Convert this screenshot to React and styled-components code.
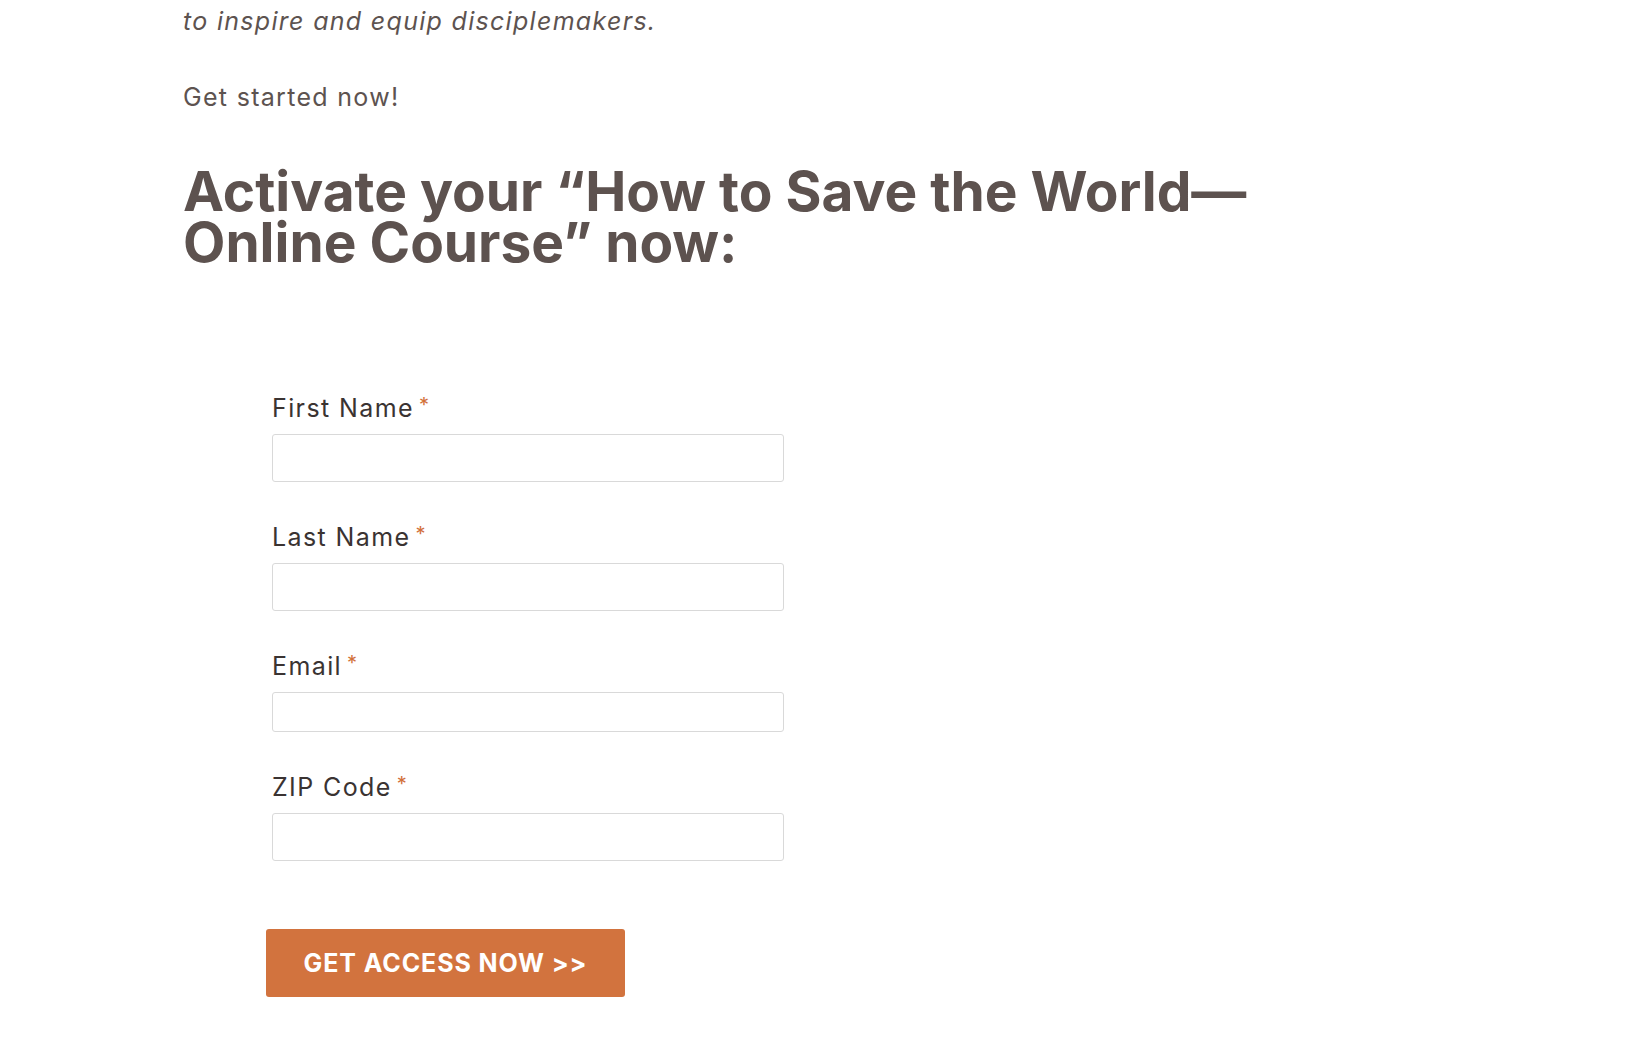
import React from "react";
import styled, { createGlobalStyle } from "styled-components";

const GlobalStyle = createGlobalStyle`
  html, body {
    margin: 0;
    padding: 0;
    background: #ffffff;
  }
  body {
    font-family: Inter, "Open Sans", "Liberation Sans", sans-serif;
    color: #5d5350;
  }
  * { box-sizing: border-box; }
`;

const Page = styled.main`
  padding: 3px 0 48px 183px;
  width: 1634px;
  overflow: hidden;
`;

const Intro = styled.p`
  margin: 0 0 40px;
  font-size: 25px;
  line-height: 36px;
  font-style: ${(p) => (p.$italic ? "italic" : "normal")};
  color: #5d5350;
  letter-spacing: 1.3px;
`;

const Heading = styled.h2`
  margin: 51px 0 0;
  font-size: 55px;
  line-height: 51px;
  font-weight: 700;
  color: #5d524f;
  letter-spacing: 0px;
`;

const Form = styled.form`
  margin: 125px 0 0 89px;
  width: 512px;
  display: flex;
  flex-direction: column;
`;

const Field = styled.div`
  display: flex;
  flex-direction: column;
  margin-bottom: 40px;
`;

const Label = styled.label`
  display: flex;
  align-items: flex-start;
  gap: 5px;
  margin-bottom: 11px;
  font-size: 25px;
  line-height: 30px;
  color: #3a3332;
  letter-spacing: 1.4px;
`;

const Required = styled.span`
  color: #d2703a;
  font-size: 20px;
  line-height: 24px;
  letter-spacing: 0;
`;

const Input = styled.input`
  width: 512px;
  height: ${(p) => p.$h}px;
  border: 1px solid #d9d9d9;
  border-radius: 3px;
  background: #fff;
  padding: 0 12px;
  font-size: 18px;
  font-family: inherit;
  outline: none;
`;

const Button = styled.button`
  margin: 28px 0 0 -6px;
  width: 359px;
  height: 68px;
  border: none;
  border-radius: 3px;
  background: #d2733e;
  color: #ffffff;
  font-family: inherit;
  font-size: 25px;
  font-weight: 700;
  letter-spacing: 0.9px;
  cursor: pointer;
`;

const fields = [
  { label: "First Name", h: 48 },
  { label: "Last Name", h: 48 },
  { label: "Email", h: 40 },
  { label: "ZIP Code", h: 48 },
];

export default function App() {
  return (
    <>
      <GlobalStyle />
      <Page>
        <Intro $italic>to inspire and equip disciplemakers.</Intro>
        <Intro>Get started now!</Intro>
        <Heading>
          Activate your “How to Save the World—
          <br />
          Online Course” now:
        </Heading>
        <Form onSubmit={(e) => e.preventDefault()}>
          {fields.map((f) => (
            <Field key={f.label}>
              <Label>
                {f.label}
                <Required>*</Required>
              </Label>
              <Input type="text" $h={f.h} />
            </Field>
          ))}
          <Button type="submit">GET ACCESS NOW &gt;&gt;</Button>
        </Form>
      </Page>
    </>
  );
}
